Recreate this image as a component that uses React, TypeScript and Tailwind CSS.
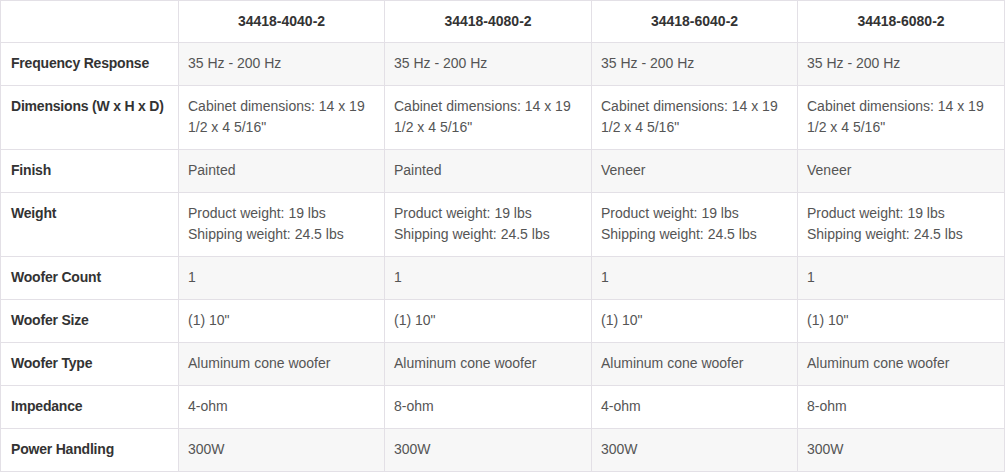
import React from 'react';

const models = ['34418-4040-2', '34418-4080-2', '34418-6040-2', '34418-6080-2'];

const dims = (
  <>
    Cabinet dimensions: 14 x 19 1/2 x 4 5/16"
  </>
);

const weight = (
  <>
    Product weight: 19 lbs
    <br />
    Shipping weight: 24.5 lbs
  </>
);

const rows: { label: string; values: React.ReactNode[] }[] = [
  { label: 'Frequency Response', values: ['35 Hz - 200 Hz', '35 Hz - 200 Hz', '35 Hz - 200 Hz', '35 Hz - 200 Hz'] },
  { label: 'Dimensions (W x H x D)', values: [dims, dims, dims, dims] },
  { label: 'Finish', values: ['Painted', 'Painted', 'Veneer', 'Veneer'] },
  { label: 'Weight', values: [weight, weight, weight, weight] },
  { label: 'Woofer Count', values: ['1', '1', '1', '1'] },
  { label: 'Woofer Size', values: ['(1) 10"', '(1) 10"', '(1) 10"', '(1) 10"'] },
  { label: 'Woofer Type', values: ['Aluminum cone woofer', 'Aluminum cone woofer', 'Aluminum cone woofer', 'Aluminum cone woofer'] },
  { label: 'Impedance', values: ['4-ohm', '8-ohm', '4-ohm', '8-ohm'] },
  { label: 'Power Handling', values: ['300W', '300W', '300W', '300W'] },
];

export default function App() {
  return (
    <div className="bg-white w-[1005px] h-[472px] font-['Liberation_Sans',Arial,sans-serif] text-[14px] leading-[21px]">
      <table className="w-[1005px] table-fixed border-collapse">
        <colgroup>
          <col className="w-[178px]" />
          <col className="w-[206px]" />
          <col className="w-[207px]" />
          <col className="w-[206px]" />
          <col className="w-[207px]" />
        </colgroup>
        <thead>
          <tr className="h-[42px]">
            <th className="border border-[#e3e0e6] bg-white" />
            {models.map((m) => (
              <th key={m} className="border border-[#e3e0e6] px-[10px] text-center font-bold text-[#333333]">
                {m}
              </th>
            ))}
          </tr>
        </thead>
        <tbody>
          {rows.map((row, i) => (
            <tr key={row.label}>
              <td className="border border-[#e3e0e6] bg-white px-[10px] pt-[10px] pb-[11px] align-top font-bold text-[#333333] whitespace-nowrap tracking-[-0.2px]">
                {row.label}
              </td>
              {row.values.map((v, j) => (
                <td
                  key={j}
                  className={`border border-[#e3e0e6] pl-[9px] pr-[10px] pt-[10px] pb-[11px] align-top text-[#555555] ${
                    i % 2 === 0 ? 'bg-[#f7f7f7]' : 'bg-white'
                  }`}
                >
                  {v}
                </td>
              ))}
            </tr>
          ))}
        </tbody>
      </table>
    </div>
  );
}
